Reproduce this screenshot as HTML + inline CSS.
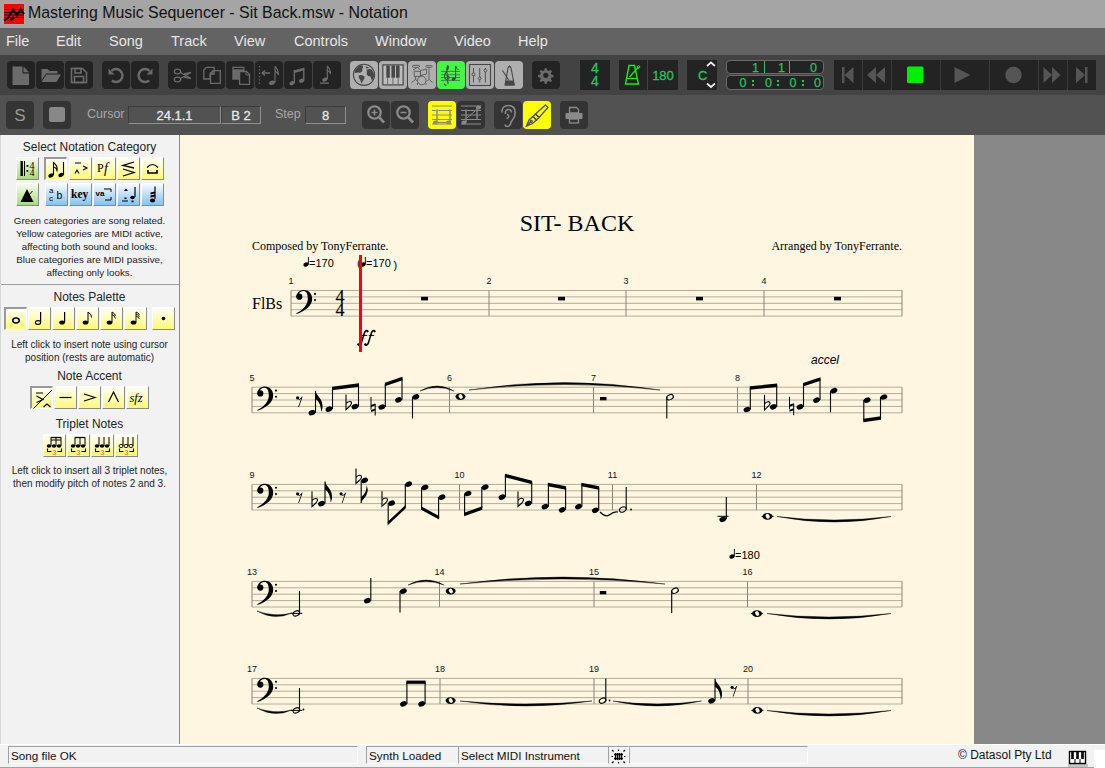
<!DOCTYPE html>
<html><head><meta charset="utf-8">
<style>
*{box-sizing:border-box;margin:0;padding:0}
html,body{width:1105px;height:768px;overflow:hidden;background:#f2f2f2;font-family:"Liberation Sans",sans-serif}
.a{position:absolute}
#title{left:0;top:0;width:1105px;height:28px;background:#a5a5a5}
#title .t{left:28px;top:4px;font-size:15.9px;color:#111;white-space:nowrap}
#menu{left:0;top:28px;width:1105px;height:27px;background:#636363}
#menu span{position:absolute;top:5px;font-size:14.5px;color:#e6e6e6}
#tb1{left:0;top:55px;width:1105px;height:40px;background:#434343}
#tb2{left:0;top:95px;width:1105px;height:40px;background:#525252}
.b1{position:absolute;top:6px;width:28px;height:28px;background:#232323;border-radius:4px}
.blt{position:absolute;top:6px;width:28px;height:28px;background:#afafaf;border-radius:4px}
.b2{position:absolute;top:6px;width:28px;height:28px;background:#343434;border-radius:4px}
.b1 svg,.blt svg,.b2 svg{position:absolute;left:0;top:0}
#left{left:0;top:135px;width:179px;height:609px;background:#f2f2f2;border-left:1px solid #d6d6d6}
#lborder{left:179px;top:135px;width:1px;height:609px;background:#8a8a8a}
#score{left:180px;top:135px;width:794px;height:609px;background:#fff6e1}
#grayr{left:974px;top:135px;width:131px;height:609px;background:#888888}
#status{left:0;top:744px;width:1105px;height:24px;background:#f2f2f2;border-top:1px solid #fff}
#status .f{position:absolute;top:1px;height:18px;border-top:1px solid #a0a0a0;border-left:1px solid #a0a0a0;border-bottom:1px solid #fff;border-right:1px solid #fff;font-size:11.7px;color:#111;padding-left:2px;padding-top:1px;line-height:16px;white-space:nowrap}
#sbline{left:0;top:767px;width:1094px;height:1px;background:#a0a0a0}
.nb{position:absolute;width:23px;height:23px;border-top:1px solid #fff;border-left:1px solid #fff;border-right:1.5px solid #8a8a8a;border-bottom:1.5px solid #8a8a8a}
.nb svg{position:absolute;left:0;top:0}
.nb.sel{border-top:2px solid #9a9a9a;border-left:2px solid #9a9a9a;border-right:1px solid #fff;border-bottom:1px solid #fff}
.g{background:linear-gradient(#f6fbf0,#a6da82)}
.y{background:linear-gradient(#fffff6,#fff878)}
.bl{background:linear-gradient(#f6fbff,#86c2ee)}
</style></head><body>
<div id="title" class="a">
  <svg class="a" style="left:3px;top:3px" width="22" height="22" viewBox="0 0 22 22"><rect x="0.5" y="0.5" width="21" height="21" fill="#9fb0b0"/><rect x="1" y="1" width="20" height="20" fill="#ff0000"/><path d="M1 6.5H21" stroke="#900" stroke-width="1"/><path d="M1 9.5H21M1 12H21M1 14.5H21" stroke="#000" stroke-width="1" opacity="0.85"/><path d="M1 17.5L5 15L10 6.5L14 12.5L17.5 6L21 11" fill="none" stroke="#000" stroke-width="2"/><path d="M7.5 17.5L11 14" stroke="#000" stroke-width="2.5"/></svg>
  <div class="a t">Mastering Music Sequencer - Sit Back.msw - Notation</div>
</div>
<div id="menu" class="a">
  <span style="left:6px">File</span><span style="left:56px">Edit</span><span style="left:109px">Song</span><span style="left:171px">Track</span><span style="left:234px">View</span><span style="left:294px">Controls</span><span style="left:375px">Window</span><span style="left:454px">Video</span><span style="left:518px">Help</span>
</div>
<div id="tb1" class="a">
<div class="b1" style="left:7px"><svg width="28" height="28"><path d="M5.5 5.5H15.5V12.5H22V24H5.5Z" fill="#6b6b6b"/><path d="M16.5 5.5L22 11.3H16.5Z" fill="#6b6b6b"/></svg></div>
<div class="b1" style="left:36px"><svg width="28" height="28"><path d="M5.5 8H11.5L13.5 10H21.5V12.5H10L5.5 19.5Z" fill="#6b6b6b"/><path d="M10.5 13.5H25L20.5 21H5.5Z" fill="#6b6b6b"/></svg></div>
<div class="b1" style="left:65px"><svg width="28" height="28"><path d="M6.5 7.5H17.5L21.5 11.5V21.5H6.5Z" fill="none" stroke="#6b6b6b" stroke-width="1.6"/><rect x="10" y="7.5" width="6" height="4.5" fill="none" stroke="#6b6b6b" stroke-width="1.6"/><rect x="9.5" y="15.5" width="9" height="6" fill="none" stroke="#6b6b6b" stroke-width="1.6"/></svg></div>
<div class="b1" style="left:102px"><svg width="28" height="28"><path d="M9.5 9.8A6.5 6.5 0 1 1 9.8 19.5" fill="none" stroke="#6b6b6b" stroke-width="2.4"/><path d="M6.5 7.5V13.5H12.5Z" fill="#6b6b6b"/></svg></div>
<div class="b1" style="left:131px"><svg width="28" height="28"><path d="M18.5 9.8A6.5 6.5 0 1 0 18.2 19.5" fill="none" stroke="#6b6b6b" stroke-width="2.4"/><path d="M21.5 7.5V13.5H15.5Z" fill="#6b6b6b"/></svg></div>
<div class="b1" style="left:168px"><svg width="28" height="28"><ellipse cx="9.5" cy="10.5" rx="3.2" ry="2.4" fill="none" stroke="#6b6b6b" stroke-width="1.3"/><ellipse cx="9.5" cy="18.5" rx="3.2" ry="2.4" fill="none" stroke="#6b6b6b" stroke-width="1.3"/><path d="M12.5 11.5L23 17.5M12.5 17.5L23 11.5M16 13L23 11.5M16 16L23 17.5" stroke="#6b6b6b" stroke-width="1.3" fill="none"/></svg></div>
<div class="b1" style="left:197px"><svg width="28" height="28"><path d="M9.5 6.3H17.2V13H13V18H6.8V9Z" fill="none" stroke="#6b6b6b" stroke-width="1.3"/><path d="M16 9.7H23.3V22.3H13.5V12.2Z" fill="none" stroke="#6b6b6b" stroke-width="1.3"/><path d="M13.5 12.2H16V9.7" fill="none" stroke="#6b6b6b" stroke-width="1"/></svg></div>
<div class="b1" style="left:226px"><svg width="28" height="28"><path d="M6.3 5.8H18.5V10H13V18.7H6.3Z" fill="#6b6b6b"/><path d="M7.5 7H17.3V8.3H7.5Z" fill="#232323"/><path d="M13.6 10.5H20.5L23.5 13.5V23.3H13.6Z" fill="none" stroke="#6b6b6b" stroke-width="1.3"/><path d="M20 10.5V14H23.5" fill="none" stroke="#6b6b6b" stroke-width="1"/></svg></div>
<div class="b1" style="left:255px"><svg width="28" height="28"><path d="M4.5 5V23" stroke="#6b6b6b" stroke-width="1.3" stroke-dasharray="1.3 2"/><path d="M7 12H15M7 12L10 9.5M7 12L10 14.5" stroke="#6b6b6b" stroke-width="1.5" fill="none"/><path d="M20 5.5V21.5" stroke="#6b6b6b" stroke-width="1.2"/><ellipse cx="17" cy="21.8" rx="3" ry="2.1" fill="#6b6b6b" transform="rotate(-20 17 21.8)"/><path d="M20 5.5Q23.5 9 23.5 14Q22.5 11.5 20 10" fill="none" stroke="#6b6b6b" stroke-width="1.2"/></svg></div>
<div class="b1" style="left:284px"><svg width="28" height="28"><path d="M10.3 22V9.2M19.8 19.5V6.8" stroke="#6b6b6b" stroke-width="1.4" fill="none"/><path d="M10.3 9.2L19.8 6.8V9.6L10.3 12Z" fill="#6b6b6b"/><ellipse cx="8" cy="22.2" rx="2.7" ry="2" fill="#6b6b6b" transform="rotate(-20 8 22.2)"/><ellipse cx="17.6" cy="19.7" rx="2.7" ry="2" fill="#6b6b6b" transform="rotate(-20 17.6 19.7)"/></svg></div>
<div class="b1" style="left:313px"><svg width="28" height="28"><path d="M14.3 5V18.3" stroke="#6b6b6b" stroke-width="1.2"/><path d="M14.3 5Q17.8 8.5 17.5 13Q17 10.5 14.3 9.5" fill="none" stroke="#6b6b6b" stroke-width="1.1"/><ellipse cx="11.8" cy="18.6" rx="2.7" ry="1.9" fill="#6b6b6b" transform="rotate(-20 11.8 18.6)"/><path d="M7 22.1H16" stroke="#6b6b6b" stroke-width="1.4"/></svg></div>
<div class="blt" style="left:350px"><svg width="28" height="28"><circle cx="14" cy="13.8" r="10.6" fill="none" stroke="#474747" stroke-width="1.1"/><path d="M4.5 10.5Q6.5 6 11 4.2Q13.5 4 13.2 6Q11.5 7.5 12.5 9.5Q11 12.5 8.5 11.5Q6.5 11 5.5 12.5Z" fill="#474747"/><path d="M8.5 14.5Q11 13.5 14 15Q15.5 16.5 14 18Q12.5 19.5 12 22.5L11 21Q10 18.5 9 17Z" fill="#474747"/><path d="M16.5 9Q19 7.5 21.5 8.5Q24 11 24.3 14.5Q23.5 17.5 22 19.8Q21 17.5 20.5 15.5Q17.5 15.5 16.5 13Q17.5 11 16.5 9Z" fill="#474747"/><path d="M15.5 5.5Q18 5.5 19.5 7L16.5 7.5Z" fill="#474747"/></svg></div>
<div class="blt" style="left:379px"><svg width="28" height="28"><rect x="3.8" y="3.9" width="20.3" height="20" fill="#bdbdbd" stroke="#474747" stroke-width="1.2"/><path d="M7.3 4.5H10.8V16.8H7.3ZM12.4 4.5H16V16.8H12.4ZM17 4.5H20.6V16.8H17Z" fill="#474747"/><path d="M8.6 16.8V23.5M13.9 16.8V23.5M19.2 16.8V23.5" stroke="#6a6a6a" stroke-width="1"/></svg></div>
<div class="blt" style="left:408px"><svg width="28" height="28" fill="none" stroke="#575757" stroke-width="0.9"><ellipse cx="8" cy="5.3" rx="3.8" ry="1.1"/><ellipse cx="21" cy="5.4" rx="3.4" ry="1"/><path d="M21 6.4V18.5M9.5 6.5L12 8.5M5 9L8.5 7"/><path d="M6.2 10.3H12.5V15.4H6.2Z"/><path d="M12.5 9.5L18.5 8V13L12.5 14.5Z"/><circle cx="13.8" cy="19.5" r="4.3"/><path d="M7.5 15.4V18.5L3.5 21.7M7.5 18.5L9.5 20M21.4 18.5L24.5 21.7M21 18.5L19 20.5M9.5 22V24M18 22V24"/></svg></div>
<div class="blt" style="left:437px;background:#45f745"><svg width="28" height="28" fill="none" stroke="#444"><path d="M4 10.4H23M4 13.7H23M4 16.5H23M4 19.4H23" stroke-width="0.8" stroke="#555"/><path d="M9.5 24Q7 24.5 7.5 22.5M10.5 4.5Q12 5.5 11 8Q8 12 7.5 15Q7.5 18.5 10 18.5Q12.5 18.5 12 16Q11.5 14.5 9.5 15M10.5 4.5Q9.5 8 10 12L11 23" stroke-width="1.1"/><ellipse cx="16.6" cy="18.2" rx="2.1" ry="1.5" fill="#444" stroke="none" transform="rotate(-25 16.6 18.2)"/><path d="M18.6 17.8V5Q19.5 7.5 21.5 9" stroke-width="1"/></svg></div>
<div class="blt" style="left:466px"><svg width="28" height="28" fill="none" stroke="#474747"><rect x="3.5" y="3.5" width="21" height="21" stroke-width="1.1"/><path d="M7.5 7V21.5M13.7 7V21.5M19.4 7V21.5" stroke-width="0.9"/><circle cx="7.5" cy="13.3" r="1.5" fill="#afafaf" stroke-width="0.9"/><path d="M13.7 15.5L15.2 17.3L13.7 19.1L12.2 17.3Z" fill="#afafaf" stroke-width="0.9"/><path d="M19.4 7.8L20.9 9.6L19.4 11.4L17.9 9.6Z" fill="#afafaf" stroke-width="0.9"/></svg></div>
<div class="blt" style="left:495px"><svg width="28" height="28"><path d="M13 7Q14.5 3.5 16 7L19.3 24H10Z" fill="none" stroke="#484848" stroke-width="1.1"/><path d="M10.8 19.5H18.5L19.5 24.5H10Z" fill="#484848"/><path d="M7.5 9.5L14 19.5" stroke="#484848" stroke-width="1.1"/><path d="M13 6.5L14.5 4L16 6.5Z" fill="#484848"/></svg></div>
<div class="b1" style="left:532px"><svg width="28" height="28"><g transform="translate(13.8 14.3) scale(0.8) translate(-14 -14)"><path d="M12.6 5.2h2.8l.5 2.8 1.6.7 2.3-1.6 2 2-1.6 2.3.7 1.6 2.8.5v2.8l-2.8.5-.7 1.6 1.6 2.3-2 2-2.3-1.6-1.6.7-.5 2.8h-2.8l-.5-2.8-1.6-.7-2.3 1.6-2-2 1.6-2.3-.7-1.6-2.8-.5v-2.8l2.8-.5.7-1.6-1.6-2.3 2-2 2.3 1.6 1.6-.7Z" fill="#6b6b6b"/><circle cx="14" cy="14" r="3.2" fill="#232323"/></g></svg></div>
<div class="a" style="left:580px;top:5px;width:30px;height:30px;background:#232323"><div class="a" style="left:0;top:1.5px;width:30px;text-align:center;font-size:14px;line-height:13px;color:#27c45a;-webkit-text-stroke:0.3px #27c45a">4<br>4</div></div>
<div class="a" style="left:619px;top:5px;width:28px;height:30px;background:#232323"><svg width="28" height="30"><path d="M10 5.5H15.5L19.5 24H6.5Z" fill="none" stroke="#18ee18" stroke-width="1.4"/><path d="M8 18.5H18" stroke="#18ee18" stroke-width="1.2"/><path d="M10.5 17L19.5 7" stroke="#18ee18" stroke-width="1.2"/><circle cx="19.5" cy="7" r="1.3" fill="none" stroke="#18ee18" stroke-width="1"/></svg></div>
<div class="a" style="left:648px;top:5px;width:30px;height:30px;background:#232323"><div class="a" style="left:0;top:7.5px;width:30px;text-align:center;font-size:13px;color:#27c45a;-webkit-text-stroke:0.3px #27c45a">180</div></div>
<div class="a" style="left:687px;top:5px;width:30px;height:30px;background:#232323"><div class="a" style="left:11px;top:7.5px;font-size:13px;color:#27c45a;-webkit-text-stroke:0.3px #27c45a">C</div><svg class="a" style="left:19px;top:0px" width="10" height="30"><path d="M1 6L5 2.5L9 6M1 23.5L5 27L9 23.5" fill="none" stroke="#f0f0f0" stroke-width="1.7"/></svg></div>
<div class="a" style="left:726px;top:5px;width:98px;height:14px;background:#232323;border:1px solid #6a6a6a;border-radius:4px"></div>
<div class="a" style="left:726px;top:20px;width:98px;height:15px;background:#232323;border:1px solid #6a6a6a;border-radius:4px"></div>
<div class="a" style="left:764px;top:6px;width:1px;height:12px;background:#27c45a"></div>
<div class="a" style="left:789px;top:6px;width:1px;height:12px;background:#27c45a"></div>
<div class="a" style="left:752px;top:5.5px;font-size:12.5px;color:#27c45a;-webkit-text-stroke:0.25px #27c45a">1</div>
<div class="a" style="left:778px;top:5.5px;font-size:12.5px;color:#27c45a;-webkit-text-stroke:0.25px #27c45a">1</div>
<div class="a" style="left:810px;top:5.5px;font-size:12.5px;color:#27c45a;-webkit-text-stroke:0.25px #27c45a">0</div>
<div class="a" style="left:739.5px;top:20.5px;font-size:12.5px;color:#27c45a;-webkit-text-stroke:0.25px #27c45a">0</div>
<div class="a" style="left:765px;top:20.5px;font-size:12.5px;color:#27c45a;-webkit-text-stroke:0.25px #27c45a">0</div>
<div class="a" style="left:789.5px;top:20.5px;font-size:12.5px;color:#27c45a;-webkit-text-stroke:0.25px #27c45a">0</div>
<div class="a" style="left:814px;top:20.5px;font-size:12.5px;color:#27c45a;-webkit-text-stroke:0.25px #27c45a">0</div>
<div class="a" style="left:752px;top:25px;width:2px;height:2px;background:#27c45a"></div><div class="a" style="left:752px;top:29px;width:2px;height:2px;background:#27c45a"></div>
<div class="a" style="left:777px;top:25px;width:2px;height:2px;background:#27c45a"></div><div class="a" style="left:777px;top:29px;width:2px;height:2px;background:#27c45a"></div>
<div class="a" style="left:802px;top:25px;width:2px;height:2px;background:#27c45a"></div><div class="a" style="left:802px;top:29px;width:2px;height:2px;background:#27c45a"></div>
<div class="a" style="left:834px;top:5px;width:262px;height:30px;background:#232323"></div>
<div class="a" style="left:862px;top:5px;width:1px;height:30px;background:#3a3a3a"></div>
<div class="a" style="left:891px;top:5px;width:1px;height:30px;background:#3a3a3a"></div>
<div class="a" style="left:940px;top:5px;width:1px;height:30px;background:#3a3a3a"></div>
<div class="a" style="left:989px;top:5px;width:1px;height:30px;background:#3a3a3a"></div>
<div class="a" style="left:1038px;top:5px;width:1px;height:30px;background:#3a3a3a"></div>
<div class="a" style="left:1067px;top:5px;width:1px;height:30px;background:#3a3a3a"></div>
<svg class="a" style="left:834px;top:5px" width="262" height="30">
<path d="M8 7H10.5V23H8ZM10.5 15L19.5 7V23Z" fill="#555"/>
<path d="M33 15L42 7V23ZM42 15L51 7V23Z" fill="#555"/>
<rect x="73" y="6.5" width="16.5" height="16.5" rx="1.5" fill="#00ee00"/>
<path d="M120.5 7V23L136.5 15Z" fill="#555"/>
<circle cx="179.5" cy="15" r="8.2" fill="#555"/>
<path d="M209.5 7L218 15L209.5 23ZM218 7L226.5 15L218 23Z" fill="#555"/>
<path d="M242 7L251 15L242 23ZM251 7H253.5V23H251Z" fill="#555"/>
</svg>
</div>
<div id="tb2" class="a">
<div class="b2" style="left:6px"><div class="a" style="left:0;top:5px;width:28px;text-align:center;font-size:17px;color:#9a9a9a">S</div></div>
<div class="b2" style="left:43px"><div class="a" style="left:6px;top:6px;width:15.5px;height:15px;background:#888;border-radius:2.5px"></div></div>
<div class="a" style="left:87px;top:11.5px;font-size:12.5px;color:#a8a8a8">Cursor</div>
<div class="a" style="left:128px;top:11px;width:93px;height:18px;border-top:1px solid #3c3c3c;border-left:1px solid #3c3c3c;border-bottom:1px solid #909090;border-right:1px solid #909090;font-size:13px;color:#e8e8e8;text-align:center;line-height:17px;-webkit-text-stroke:0.3px #e8e8e8">24.1.1</div>
<div class="a" style="left:221px;top:11px;width:40px;height:18px;border-top:1px solid #3c3c3c;border-left:1px solid #3c3c3c;border-bottom:1px solid #909090;border-right:1px solid #909090;font-size:13px;color:#e8e8e8;text-align:center;line-height:17px;-webkit-text-stroke:0.3px #e8e8e8">B 2</div>
<div class="a" style="left:275px;top:11.5px;font-size:12.5px;color:#a8a8a8">Step</div>
<div class="a" style="left:305px;top:11px;width:41px;height:18px;border-top:1px solid #3c3c3c;border-left:1px solid #3c3c3c;border-bottom:1px solid #909090;border-right:1px solid #909090;font-size:13px;color:#e8e8e8;text-align:center;line-height:17px;-webkit-text-stroke:0.3px #e8e8e8">8</div>
<div class="b2" style="left:362px"><svg width="28" height="28" fill="none" stroke="#8a8a8a"><circle cx="12.5" cy="11.5" r="6.2" stroke-width="2.3"/><path d="M17 16.2L22 21.5" stroke-width="2.6"/><path d="M9.5 11.5H15.5M12.5 8.5V14.5" stroke-width="1.6"/></svg></div>
<div class="b2" style="left:391px"><svg width="28" height="28" fill="none" stroke="#8a8a8a"><circle cx="12.5" cy="11.5" r="6.2" stroke-width="2.3"/><path d="M17 16.2L22 21.5" stroke-width="2.6"/><path d="M9.5 11.5H15.5" stroke-width="1.6"/></svg></div>
<div class="b2" style="left:428px;background:#ffff00"><svg width="28" height="28" fill="none" stroke="#8a8a8a" stroke-width="1.1"><path d="M4 5H24M4 9.5H24M4 14H24M4 18.5H24M4 23H24"/><path d="M9 8.5V21M22 8.5V21" stroke-width="1.4"/><ellipse cx="7.5" cy="21.5" rx="2" ry="1.4" fill="#8a8a8a"/><ellipse cx="20.5" cy="21.5" rx="2" ry="1.4" fill="#8a8a8a"/><path d="M10 21.5H18" stroke-width="1.4"/></svg></div>
<div class="b2" style="left:457px"><svg width="28" height="28" fill="none" stroke="#8a8a8a" stroke-width="1.1"><path d="M4 5H24M4 9.5H24M4 14H24M4 18.5H24M4 23H24"/><path d="M9 8.5V21M20 6V19" stroke-width="1.4"/><ellipse cx="7" cy="21.5" rx="2" ry="1.4" fill="#8a8a8a"/><ellipse cx="21.5" cy="6.5" rx="2" ry="1.4" fill="#8a8a8a"/><path d="M10 17L18 10" stroke-width="1"/></svg></div>
<div class="b2" style="left:494px"><svg width="28" height="28" fill="none" stroke="#8a8a8a" stroke-width="1.6"><path d="M7.8 11.5Q7.8 4.5 14.5 4.5Q21.2 4.5 21.2 12Q21.2 16 18 19.5Q16.8 21 16.5 23Q16 25.5 13.5 25.5Q11.5 25.5 10.8 23.5"/><path d="M11.5 13Q11 8.5 14.5 8.5Q17.5 8.5 17.5 11.5M13 13.5Q15 13.5 14.5 16Q14 17.5 12.5 17.5"/></svg></div>
<div class="b2" style="left:523px;background:#ffff00"><svg width="28" height="28" fill="none" stroke="#4a4a78" stroke-width="1.3"><path d="M22.5 4L25 6.5L16 16.5L12.5 13Z"/><path d="M12.5 13L16 16.5L13.5 19L10 15.5Z"/><path d="M10 15.5L13.5 19L9.5 22.5L3.5 25L6 19Z"/><circle cx="8.3" cy="20.3" r="1"/><path d="M3.5 25L8 20.5"/></svg></div>
<div class="b2" style="left:560px"><svg width="28" height="28"><path d="M9.5 6.5H16.5L18.5 8.5V12H9.5Z" fill="none" stroke="#8a8a8a" stroke-width="1.3"/><rect x="5.5" y="12" width="17" height="6" rx="1" fill="#8a8a8a"/><rect x="9.5" y="18" width="9" height="4" fill="none" stroke="#8a8a8a" stroke-width="1.3"/></svg></div>
</div>
<div id="left" class="a"></div>
<div class="a" style="left:0;top:0">
<div class="a" style="left:0px;top:140px;width:179px;text-align:center;font-size:12px;color:#222;white-space:nowrap">Select Notation Category</div><div class="nb g" style="left:16px;top:157px"><svg width="21" height="21" viewBox="0 0 21 21"><rect x="3.5" y="3" width="2.4" height="15" fill="#000"/><rect x="7" y="3" width="1" height="15" fill="#000"/><rect x="9.5" y="7" width="1.8" height="1.8" fill="#000"/><rect x="9.5" y="12" width="1.8" height="1.8" fill="#000"/><text x="12.5" y="10.5" font-family="Liberation Serif" font-size="10" fill="#000">4</text><text x="12.5" y="18" font-family="Liberation Serif" font-size="10" fill="#000">4</text></svg></div>
<div class="nb y sel" style="left:44px;top:157px"><svg width="21" height="21" viewBox="0 0 21 21"><path d="M7.5 16V3.5Q12 7 11 11.5Q10 8.5 8 8" fill="none" stroke="#000" stroke-width="1.1"/><ellipse cx="5" cy="16.5" rx="2.8" ry="2" fill="#000" transform="rotate(-25 5 16.5)"/><path d="M17.5 16V3" stroke="#000" stroke-width="1.1"/><ellipse cx="15" cy="16" rx="2.8" ry="2" fill="#000" transform="rotate(-25 15 16)"/></svg></div>
<div class="nb y" style="left:69px;top:157px"><svg width="21" height="21" viewBox="0 0 21 21"><path d="M5 5H11M13 8L17 10L13 12M5 15.5L7 12L9 15.5" fill="none" stroke="#000" stroke-width="1.1"/></svg></div>
<div class="nb y" style="left:93px;top:157px"><svg width="21" height="21" viewBox="0 0 21 21"><text x="3" y="14" font-family="Liberation Serif" font-size="12" fill="#000">P</text><text x="10" y="15" font-family="Liberation Serif" font-style="italic" font-size="14" fill="#000">f</text></svg></div>
<div class="nb y" style="left:117px;top:157px"><svg width="21" height="21" viewBox="0 0 21 21"><path d="M16 4L5 7.5L16 10M5 11L16 14.5L5 18" fill="none" stroke="#000" stroke-width="1.3"/></svg></div>
<div class="nb y" style="left:141px;top:157px"><svg width="21" height="21" viewBox="0 0 21 21"><path d="M5 9.5Q10.5 3.5 16 9.5" fill="none" stroke="#000" stroke-width="1.2"/><path d="M6 12V15H15V12" fill="none" stroke="#000" stroke-width="1.6"/></svg></div>
<div class="nb g" style="left:16px;top:183px"><svg width="21" height="21" viewBox="0 0 21 21"><path d="M3.5 18L10 5L16.5 18Z" fill="#000"/><path d="M9 14L15.5 7" stroke="#000" stroke-width="1"/></svg></div>
<div class="nb bl" style="left:45px;top:183px"><svg width="21" height="21" viewBox="0 0 21 21"><text x="3" y="9" font-family="Liberation Sans" font-size="8" fill="#000">a</text><text x="3" y="17" font-family="Liberation Sans" font-size="8" fill="#000">c</text><text x="10.5" y="14.5" font-family="Liberation Sans" font-size="10.5" fill="#000">b</text></svg></div>
<div class="nb bl" style="left:69px;top:183px"><svg width="21" height="21" viewBox="0 0 21 21"><text x="1" y="14" font-family="Liberation Serif" font-weight="bold" font-size="11.5" fill="#000">key</text></svg></div>
<div class="nb bl" style="left:93px;top:183px"><svg width="21" height="21" viewBox="0 0 21 21"><text x="1.5" y="12" font-family="Liberation Sans" font-weight="bold" font-size="8" fill="#000">va</text><path d="M10 5H17V8M11 16H17V13" fill="none" stroke="#000" stroke-width="1"/></svg></div>
<div class="nb bl" style="left:117px;top:183px"><svg width="21" height="21" viewBox="0 0 21 21"><path d="M6 7L8 4.5L10 7Z" fill="#000"/><rect x="6.5" y="13.5" width="2" height="1.6" fill="#000"/><path d="M4 17H10" stroke="#000" stroke-width="1"/><path d="M17 3V13" stroke="#000" stroke-width="1.2"/><ellipse cx="14.5" cy="13.5" rx="2.3" ry="1.8" fill="#000"/><rect x="13.5" y="16.5" width="2" height="1.8" fill="#000"/></svg></div>
<div class="nb bl" style="left:141px;top:183px"><svg width="21" height="21" viewBox="0 0 21 21"><path d="M13 2.5V15" stroke="#000" stroke-width="1.2"/><path d="M8.5 8.5L13 7.5V9.5L8.5 10.5ZM8.5 11.5L13 10.5V12.5L8.5 13.5Z" fill="#000"/><ellipse cx="10.5" cy="16.5" rx="2.6" ry="1.9" fill="#000"/></svg></div>
<div class="a" style="left:0px;top:215px;width:179px;text-align:center;font-size:9.8px;color:#222;white-space:nowrap">Green categories are song related.</div>
<div class="a" style="left:0px;top:228px;width:179px;text-align:center;font-size:9.8px;color:#222;white-space:nowrap">Yellow categories are MIDI active,</div>
<div class="a" style="left:0px;top:241px;width:179px;text-align:center;font-size:9.8px;color:#222;white-space:nowrap">affecting both sound and looks.</div>
<div class="a" style="left:0px;top:254px;width:179px;text-align:center;font-size:9.8px;color:#222;white-space:nowrap">Blue categories are MIDI passive,</div>
<div class="a" style="left:0px;top:267px;width:179px;text-align:center;font-size:9.8px;color:#222;white-space:nowrap">affecting only looks.</div>
<div class="a" style="left:1px;top:284px;width:178px;height:1px;background:#a0a0a0"></div>
<div class="a" style="left:0px;top:290px;width:179px;text-align:center;font-size:12px;color:#222;white-space:nowrap">Notes Palette</div><div class="nb y sel" style="left:4px;top:307px"><svg width="21" height="21" viewBox="0 0 21 21"><ellipse cx="10" cy="11.5" rx="3.2" ry="2.4" fill="none" stroke="#000" stroke-width="1.5"/></svg></div>
<div class="nb y" style="left:28px;top:307px"><svg width="21" height="21" viewBox="0 0 21 21"><ellipse cx="9" cy="14.5" rx="2.6" ry="1.9" fill="none" stroke="#000" stroke-width="1.2"/><path d="M11.6 14.5V4" stroke="#000" stroke-width="1.2"/></svg></div>
<div class="nb y" style="left:52px;top:307px"><svg width="21" height="21" viewBox="0 0 21 21"><ellipse cx="9" cy="14.5" rx="2.8" ry="2.1" fill="#000"/><path d="M11.6 14.5V4" stroke="#000" stroke-width="1.2"/></svg></div>
<div class="nb y" style="left:76px;top:307px"><svg width="21" height="21" viewBox="0 0 21 21"><ellipse cx="8.5" cy="14.5" rx="2.8" ry="2.1" fill="#000"/><path d="M11 14.5V4Q15 6.5 14.5 9.5" fill="none" stroke="#000" stroke-width="1"/></svg></div>
<div class="nb y" style="left:100px;top:307px"><svg width="21" height="21" viewBox="0 0 21 21"><ellipse cx="8.5" cy="14.5" rx="2.8" ry="2.1" fill="#000"/><path d="M11 14.5V4Q14 5.5 14.5 8M11 6.5Q14 8 14.5 10.5" fill="none" stroke="#000" stroke-width="1"/></svg></div>
<div class="nb y" style="left:124px;top:307px"><svg width="21" height="21" viewBox="0 0 21 21"><ellipse cx="8.5" cy="14.5" rx="2.8" ry="2.1" fill="#000"/><path d="M11 14.5V4Q14 5 14.5 7M11 6Q14 7 14.5 9M11 8Q14 9 14.5 11" fill="none" stroke="#000" stroke-width="0.9"/></svg></div>
<div class="nb y" style="left:152px;top:307px"><svg width="21" height="21" viewBox="0 0 21 21"><circle cx="10.5" cy="10.5" r="1.8" fill="#000"/></svg></div>
<div class="a" style="left:0px;top:339px;width:179px;text-align:center;font-size:10px;color:#222;white-space:nowrap">Left click to insert note using cursor</div>
<div class="a" style="left:0px;top:352px;width:179px;text-align:center;font-size:10px;color:#222;white-space:nowrap">position (rests are automatic)</div>
<div class="a" style="left:0px;top:369px;width:179px;text-align:center;font-size:12px;color:#222;white-space:nowrap">Note Accent</div><div class="nb y sel" style="left:30px;top:386px"><svg width="21" height="21" viewBox="0 0 21 21"><path d="M4 5H11M4.5 8L11 11.5L4.5 14.5M11.5 19L15 16L18.5 19" fill="none" stroke="#000" stroke-width="1.2"/><path d="M1.5 20.5L20 2" stroke="#000" stroke-width="1"/></svg></div>
<div class="nb y" style="left:54px;top:386px"><svg width="21" height="21" viewBox="0 0 21 21"><path d="M4.5 10.5H16.5" stroke="#000" stroke-width="1.2"/></svg></div>
<div class="nb y" style="left:78px;top:386px"><svg width="21" height="21" viewBox="0 0 21 21"><path d="M5 7L16 10.5L5 14" fill="none" stroke="#000" stroke-width="1.2"/></svg></div>
<div class="nb y" style="left:102px;top:386px"><svg width="21" height="21" viewBox="0 0 21 21"><path d="M5.5 15L10.5 5L15.5 15" fill="none" stroke="#000" stroke-width="1.2"/></svg></div>
<div class="nb y" style="left:126px;top:386px"><svg width="21" height="21" viewBox="0 0 21 21"><text x="2.5" y="14.5" font-family="Liberation Serif" font-style="italic" font-size="12.5" fill="#000">sfz</text></svg></div>
<div class="a" style="left:0px;top:417px;width:179px;text-align:center;font-size:12px;color:#222;white-space:nowrap">Triplet Notes</div><div class="nb y" style="left:43px;top:434px"><svg width="21" height="21" viewBox="0 0 21 21"><ellipse cx="5.0" cy="11" rx="2.3" ry="1.8" fill="#000"/><path d="M7.0 11V2" stroke="#000" stroke-width="1"/><ellipse cx="10.0" cy="11" rx="2.3" ry="1.8" fill="#000"/><path d="M12.0 11V2" stroke="#000" stroke-width="1"/><ellipse cx="15.0" cy="11" rx="2.3" ry="1.8" fill="#000"/><path d="M17.0 11V2" stroke="#000" stroke-width="1"/><path d="M7 2.5H17" stroke="#000" stroke-width="1.3"/><path d="M7 5H17" stroke="#000" stroke-width="1"/><path d="M3.5 13.5V16.5H7.5M13.5 16.5H17.5V13.5" fill="none" stroke="#000" stroke-width="1.1"/><text x="8.3" y="19.5" font-family="Liberation Sans" font-size="7.5" fill="#b07820">3</text></svg></div>
<div class="nb y" style="left:67px;top:434px"><svg width="21" height="21" viewBox="0 0 21 21"><ellipse cx="5.0" cy="11" rx="2.3" ry="1.8" fill="#000"/><path d="M7.0 11V2" stroke="#000" stroke-width="1"/><ellipse cx="10.0" cy="11" rx="2.3" ry="1.8" fill="#000"/><path d="M12.0 11V2" stroke="#000" stroke-width="1"/><ellipse cx="15.0" cy="11" rx="2.3" ry="1.8" fill="#000"/><path d="M17.0 11V2" stroke="#000" stroke-width="1"/><path d="M7 2.5H17" stroke="#000" stroke-width="1.3"/><path d="M3.5 13.5V16.5H7.5M13.5 16.5H17.5V13.5" fill="none" stroke="#000" stroke-width="1.1"/><text x="8.3" y="19.5" font-family="Liberation Sans" font-size="7.5" fill="#b07820">3</text></svg></div>
<div class="nb y" style="left:91px;top:434px"><svg width="21" height="21" viewBox="0 0 21 21"><ellipse cx="5.0" cy="11" rx="2.3" ry="1.8" fill="#000"/><path d="M7.0 11V2" stroke="#000" stroke-width="1"/><ellipse cx="10.0" cy="11" rx="2.3" ry="1.8" fill="#000"/><path d="M12.0 11V2" stroke="#000" stroke-width="1"/><ellipse cx="15.0" cy="11" rx="2.3" ry="1.8" fill="#000"/><path d="M17.0 11V2" stroke="#000" stroke-width="1"/><path d="M3.5 13.5V16.5H7.5M13.5 16.5H17.5V13.5" fill="none" stroke="#000" stroke-width="1.1"/><text x="8.3" y="19.5" font-family="Liberation Sans" font-size="7.5" fill="#b07820">3</text></svg></div>
<div class="nb y" style="left:115px;top:434px"><svg width="21" height="21" viewBox="0 0 21 21"><ellipse cx="5.0" cy="11" rx="2" ry="1.6" fill="none" stroke="#000" stroke-width="0.9"/><path d="M7.0 11V2" stroke="#000" stroke-width="1"/><ellipse cx="10.0" cy="11" rx="2" ry="1.6" fill="none" stroke="#000" stroke-width="0.9"/><path d="M12.0 11V2" stroke="#000" stroke-width="1"/><ellipse cx="15.0" cy="11" rx="2" ry="1.6" fill="none" stroke="#000" stroke-width="0.9"/><path d="M17.0 11V2" stroke="#000" stroke-width="1"/><path d="M3.5 13.5V16.5H7.5M13.5 16.5H17.5V13.5" fill="none" stroke="#000" stroke-width="1.1"/><text x="8.3" y="19.5" font-family="Liberation Sans" font-size="7.5" fill="#b07820">3</text></svg></div>
<div class="a" style="left:0px;top:465px;width:179px;text-align:center;font-size:10px;color:#222;white-space:nowrap">Left click to insert all 3 triplet notes,</div>
<div class="a" style="left:0px;top:478px;width:179px;text-align:center;font-size:10px;color:#222;white-space:nowrap">then modify pitch of notes 2 and 3.</div>
</div>
<div id="lborder" class="a"></div>
<div id="score" class="a"></div>
<svg class="a" style="left:180px;top:135px" width="794" height="609" font-family="Liberation Sans"><g transform="translate(-180,-135)"><text x="577" y="231" font-family="Liberation Serif" font-size="24" text-anchor="middle" fill="#000">SIT- BACK</text><text x="252" y="249.7" font-family="Liberation Serif" font-size="12" fill="#000">Composed by TonyFerrante.</text><text x="902" y="249.7" font-family="Liberation Serif" font-size="12" text-anchor="end" fill="#000">Arranged by TonyFerrante.</text><ellipse cx="306" cy="264.5" rx="2.7" ry="2" fill="#000" transform="rotate(-20 306 264.5)"/><line x1="308.4" y1="264.5" x2="308.4" y2="257.0" stroke="#000" stroke-width="0.9"/><text x="309" y="266.8" font-size="11" fill="#000">=170</text><text x="357" y="266.8" font-size="11.5" fill="#000">(</text><ellipse cx="363" cy="264.5" rx="2.7" ry="2" fill="#000" transform="rotate(-20 363 264.5)"/><line x1="365.4" y1="264.5" x2="365.4" y2="257.0" stroke="#000" stroke-width="0.9"/><text x="366" y="266.8" font-size="11" fill="#000">=170</text><text x="393.5" y="269" font-size="11" fill="#000">)</text><ellipse cx="732" cy="556.5" rx="2.7" ry="2" fill="#000" transform="rotate(-20 732 556.5)"/><line x1="734.4" y1="556.5" x2="734.4" y2="549.0" stroke="#000" stroke-width="0.9"/><text x="735" y="558.8" font-size="11" fill="#000">=180</text><text x="811" y="364" font-size="12" font-style="italic" fill="#000">accel</text><text x="252" y="309" font-family="Liberation Serif" font-size="16" fill="#000">FlBs</text><line x1="291" y1="290.50" x2="902" y2="290.50" stroke="#b4ac9a" stroke-width="1"/><line x1="291" y1="296.90" x2="902" y2="296.90" stroke="#b4ac9a" stroke-width="1"/><line x1="291" y1="303.30" x2="902" y2="303.30" stroke="#b4ac9a" stroke-width="1"/><line x1="291" y1="309.70" x2="902" y2="309.70" stroke="#b4ac9a" stroke-width="1"/><line x1="291" y1="316.10" x2="902" y2="316.10" stroke="#b4ac9a" stroke-width="1"/><line x1="291" y1="290.5" x2="291" y2="316.10" stroke="#8a8478" stroke-width="1"/><line x1="489" y1="290.5" x2="489" y2="316.10" stroke="#8a8478" stroke-width="1"/><line x1="626" y1="290.5" x2="626" y2="316.10" stroke="#8a8478" stroke-width="1"/><line x1="764" y1="290.5" x2="764" y2="316.10" stroke="#8a8478" stroke-width="1"/><line x1="902" y1="290.5" x2="902" y2="316.10" stroke="#8a8478" stroke-width="1"/><text x="291" y="284.2" font-size="9" text-anchor="middle" fill="#111">1</text><text x="489" y="284.2" font-size="9" text-anchor="middle" fill="#111">2</text><text x="626" y="284.2" font-size="9" text-anchor="middle" fill="#111">3</text><text x="764" y="284.2" font-size="9" text-anchor="middle" fill="#111">4</text><g transform="translate(296,290.5)"><path d="M0.6 6.2C0.4 1.8 4.2 -0.6 7.8 -0.6C13.2 -0.6 16.2 3.4 16.2 8.6C16.2 15 9.5 20.5 0.6 23.6L0.2 22.8C7.2 19.2 11.8 14.2 11.8 8.2C11.8 3 10 0.6 7.4 0.6C5 0.6 3.2 2 3 3.6Z" fill="#000"/><circle cx="3.3" cy="6.2" r="3.1" fill="#000"/><circle cx="19" cy="3.4" r="1.05" fill="#000"/><circle cx="19" cy="9.6" r="1.05" fill="#000"/></g><text x="340" y="303" font-family="Liberation Serif" font-size="18" text-anchor="middle" fill="#000" stroke="#000" stroke-width="0.2">4</text><text x="340" y="316" font-family="Liberation Serif" font-size="18" text-anchor="middle" fill="#000" stroke="#000" stroke-width="0.2">4</text><rect x="421" y="296.8" width="7" height="3.6" fill="#000"/><rect x="558" y="296.8" width="7" height="3.6" fill="#000"/><rect x="696" y="296.8" width="7" height="3.6" fill="#000"/><rect x="834" y="296.8" width="7" height="3.6" fill="#000"/><g transform="translate(357,329.8)"><path d="M1.2 15.2C2.8 15.6 4 14.5 4.6 12.5L7.4 3.2C8 1.2 9.3 0.4 10.8 0.8" fill="none" stroke="#000" stroke-width="1.5"/><circle cx="1.4" cy="14.6" r="1.2" fill="#000"/><circle cx="10.6" cy="1.5" r="1.1" fill="#000"/><path d="M4.8 5.6H10.2" stroke="#000" stroke-width="1"/></g><g transform="translate(364,329.8)"><path d="M1.2 15.2C2.8 15.6 4 14.5 4.6 12.5L7.4 3.2C8 1.2 9.3 0.4 10.8 0.8" fill="none" stroke="#000" stroke-width="1.5"/><circle cx="1.4" cy="14.6" r="1.2" fill="#000"/><circle cx="10.6" cy="1.5" r="1.1" fill="#000"/><path d="M4.8 5.6H10.2" stroke="#000" stroke-width="1"/></g><line x1="252" y1="387.20" x2="902" y2="387.20" stroke="#b4ac9a" stroke-width="1"/><line x1="252" y1="393.60" x2="902" y2="393.60" stroke="#b4ac9a" stroke-width="1"/><line x1="252" y1="400.00" x2="902" y2="400.00" stroke="#b4ac9a" stroke-width="1"/><line x1="252" y1="406.40" x2="902" y2="406.40" stroke="#b4ac9a" stroke-width="1"/><line x1="252" y1="412.80" x2="902" y2="412.80" stroke="#b4ac9a" stroke-width="1"/><line x1="252" y1="387.2" x2="252" y2="412.80" stroke="#8a8478" stroke-width="1"/><line x1="449.5" y1="387.2" x2="449.5" y2="412.80" stroke="#8a8478" stroke-width="1"/><line x1="593.5" y1="387.2" x2="593.5" y2="412.80" stroke="#8a8478" stroke-width="1"/><line x1="737.5" y1="387.2" x2="737.5" y2="412.80" stroke="#8a8478" stroke-width="1"/><line x1="902" y1="387.2" x2="902" y2="412.80" stroke="#8a8478" stroke-width="1"/><text x="252" y="380.9" font-size="9" text-anchor="middle" fill="#111">5</text><text x="449.5" y="380.9" font-size="9" text-anchor="middle" fill="#111">6</text><text x="593.5" y="380.9" font-size="9" text-anchor="middle" fill="#111">7</text><text x="737.5" y="380.9" font-size="9" text-anchor="middle" fill="#111">8</text><g transform="translate(257,387.2)"><path d="M0.6 6.2C0.4 1.8 4.2 -0.6 7.8 -0.6C13.2 -0.6 16.2 3.4 16.2 8.6C16.2 15 9.5 20.5 0.6 23.6L0.2 22.8C7.2 19.2 11.8 14.2 11.8 8.2C11.8 3 10 0.6 7.4 0.6C5 0.6 3.2 2 3 3.6Z" fill="#000"/><circle cx="3.3" cy="6.2" r="3.1" fill="#000"/><circle cx="19" cy="3.4" r="1.05" fill="#000"/><circle cx="19" cy="9.6" r="1.05" fill="#000"/></g><circle cx="297.6" cy="397.8" r="1.6" fill="#000"/><path d="M297 399C299 399.8 301 398.5 302 396.5L302.6 396.8L299 407L298.2 407L301 399C300 399.8 298.5 400 297 399Z" fill="#000"/><ellipse cx="312" cy="412.7" rx="3.5" ry="2.55" fill="#000" transform="rotate(-22 312 412.7)"/><line x1="315.5" y1="412.7" x2="315.5" y2="391" stroke="#000" stroke-width="1.1"/><path d="M315.5 391C316.5 396 323.5 399 322.5 408C322.0 410 321.5 411 321.0 412C321.5 408 319.5 401 315.5 399Z" fill="#000"/><ellipse cx="329" cy="409.1" rx="3.5" ry="2.55" fill="#000" transform="rotate(-22 329 409.1)"/><line x1="332.5" y1="409.1" x2="332.5" y2="388.5" stroke="#000" stroke-width="1.1"/><path d="M346 394.6V409.6C348 407.6 351.5 405.6 351.5 403.1C351.5 400.6 348 401.1 346 403.6" fill="none" stroke="#000" stroke-width="1.1"/><ellipse cx="355" cy="406.6" rx="3.5" ry="2.55" fill="#000" transform="rotate(-22 355 406.6)"/><line x1="358.5" y1="406.6" x2="358.5" y2="385" stroke="#000" stroke-width="1.1"/><path d="M332.0 386.8L359.0 383.3L359.0 386.7L332.0 390.2Z" fill="#000"/><path d="M371 397V409.5M375.2 404V415.5" stroke="#000" stroke-width="1"/><path d="M371 405L375.2 403.5V405.5L371 407ZM371 410L375.2 408.5V410.5L371 412Z" fill="#000"/><ellipse cx="381.8" cy="407" rx="3.5" ry="2.55" fill="#000" transform="rotate(-22 381.8 407)"/><line x1="385.3" y1="407" x2="385.3" y2="384.5" stroke="#000" stroke-width="1.1"/><ellipse cx="398.5" cy="399.8" rx="3.5" ry="2.55" fill="#000" transform="rotate(-22 398.5 399.8)"/><line x1="402" y1="399.8" x2="402" y2="378.5" stroke="#000" stroke-width="1.1"/><path d="M384.8 382.8L402.5 376.8L402.5 380.2L384.8 386.2Z" fill="#000"/><ellipse cx="415.9" cy="396.8" rx="3.5" ry="2.55" fill="#000" transform="rotate(-22 415.9 396.8)"/><line x1="412.5" y1="396.8" x2="412.5" y2="418.5" stroke="#000" stroke-width="1.1"/><path d="M420 391Q437.0 381.0 454 391Q437.0 384.2 420 391Z" fill="#000" stroke="#000" stroke-width="0.4"/><ellipse cx="460.5" cy="396.6" rx="5" ry="3.4" fill="#000"/><ellipse cx="460.7" cy="396.6" rx="1.9" ry="2.5" fill="#fff6e1" transform="rotate(-35 460.5 396.6)"/><path d="M469 390Q564.5 375.0 660 390Q564.5 379.0 469 390Z" fill="#000" stroke="#000" stroke-width="0.4"/><rect x="600" y="397" width="6.5" height="3.3" fill="#000"/><ellipse cx="670" cy="397.2" rx="3.5" ry="2.4" fill="none" stroke="#000" stroke-width="1.1" transform="rotate(-25 670 397.2)"/><line x1="666.8" y1="397.2" x2="666.8" y2="418.5" stroke="#000" stroke-width="1.1"/><ellipse cx="747" cy="409.5" rx="3.5" ry="2.55" fill="#000" transform="rotate(-22 747 409.5)"/><line x1="750.3" y1="409.5" x2="750.3" y2="388" stroke="#000" stroke-width="1.1"/><path d="M764.5 394.8V409.8C766.5 407.8 770.0 405.8 770.0 403.3C770.0 400.8 766.5 401.3 764.5 403.8" fill="none" stroke="#000" stroke-width="1.1"/><ellipse cx="773.3" cy="406.8" rx="3.5" ry="2.55" fill="#000" transform="rotate(-22 773.3 406.8)"/><line x1="776.7" y1="406.8" x2="776.7" y2="385.3" stroke="#000" stroke-width="1.1"/><path d="M749.8 386.3L777.2 383.6L777.2 387.0L749.8 389.7Z" fill="#000"/><path d="M789.5 396.8V409.3M793.7 403.8V415.3" stroke="#000" stroke-width="1"/><path d="M789.5 404.8L793.7 403.3V405.3L789.5 406.8ZM789.5 409.8L793.7 408.3V410.3L789.5 411.8Z" fill="#000"/><ellipse cx="800" cy="406.8" rx="3.5" ry="2.55" fill="#000" transform="rotate(-22 800 406.8)"/><line x1="803.5" y1="406.8" x2="803.5" y2="384.8" stroke="#000" stroke-width="1.1"/><ellipse cx="816.6" cy="400.1" rx="3.5" ry="2.55" fill="#000" transform="rotate(-22 816.6 400.1)"/><line x1="820" y1="400.1" x2="820" y2="379" stroke="#000" stroke-width="1.1"/><path d="M803.0 383.1L820.5 377.3L820.5 380.7L803.0 386.5Z" fill="#000"/><ellipse cx="834" cy="390.6" rx="3.5" ry="2.55" fill="#000" transform="rotate(-22 834 390.6)"/><line x1="830.5" y1="390.6" x2="830.5" y2="412.3" stroke="#000" stroke-width="1.1"/><ellipse cx="867.2" cy="400.1" rx="3.5" ry="2.55" fill="#000" transform="rotate(-22 867.2 400.1)"/><line x1="863.8" y1="400.1" x2="863.8" y2="420.5" stroke="#000" stroke-width="1.1"/><ellipse cx="883.9" cy="397" rx="3.5" ry="2.55" fill="#000" transform="rotate(-22 883.9 397)"/><line x1="880.5" y1="397" x2="880.5" y2="418" stroke="#000" stroke-width="1.1"/><path d="M863.3 418.8L881.0 416.3L881.0 419.7L863.3 422.2Z" fill="#000"/><line x1="252" y1="484.40" x2="902" y2="484.40" stroke="#b4ac9a" stroke-width="1"/><line x1="252" y1="490.80" x2="902" y2="490.80" stroke="#b4ac9a" stroke-width="1"/><line x1="252" y1="497.20" x2="902" y2="497.20" stroke="#b4ac9a" stroke-width="1"/><line x1="252" y1="503.60" x2="902" y2="503.60" stroke="#b4ac9a" stroke-width="1"/><line x1="252" y1="510.00" x2="902" y2="510.00" stroke="#b4ac9a" stroke-width="1"/><line x1="252" y1="484.4" x2="252" y2="510.00" stroke="#8a8478" stroke-width="1"/><line x1="459.5" y1="484.4" x2="459.5" y2="510.00" stroke="#8a8478" stroke-width="1"/><line x1="612.5" y1="484.4" x2="612.5" y2="510.00" stroke="#8a8478" stroke-width="1"/><line x1="756.5" y1="484.4" x2="756.5" y2="510.00" stroke="#8a8478" stroke-width="1"/><line x1="902" y1="484.4" x2="902" y2="510.00" stroke="#8a8478" stroke-width="1"/><text x="252" y="478.1" font-size="9" text-anchor="middle" fill="#111">9</text><text x="459.5" y="478.1" font-size="9" text-anchor="middle" fill="#111">10</text><text x="612.5" y="478.1" font-size="9" text-anchor="middle" fill="#111">11</text><text x="756.5" y="478.1" font-size="9" text-anchor="middle" fill="#111">12</text><g transform="translate(257,484.4)"><path d="M0.6 6.2C0.4 1.8 4.2 -0.6 7.8 -0.6C13.2 -0.6 16.2 3.4 16.2 8.6C16.2 15 9.5 20.5 0.6 23.6L0.2 22.8C7.2 19.2 11.8 14.2 11.8 8.2C11.8 3 10 0.6 7.4 0.6C5 0.6 3.2 2 3 3.6Z" fill="#000"/><circle cx="3.3" cy="6.2" r="3.1" fill="#000"/><circle cx="19" cy="3.4" r="1.05" fill="#000"/><circle cx="19" cy="9.6" r="1.05" fill="#000"/></g><circle cx="297.6" cy="493.8" r="1.6" fill="#000"/><path d="M297 495C299 495.8 301 494.5 302 492.5L302.6 492.8L299 503L298.2 503L301 495C300 495.8 298.5 496 297 495Z" fill="#000"/><path d="M312 491.6V506.6C314 504.6 317.5 502.6 317.5 500.1C317.5 497.6 314 498.1 312 500.6" fill="none" stroke="#000" stroke-width="1.1"/><ellipse cx="321.5" cy="503.6" rx="3.5" ry="2.55" fill="#000" transform="rotate(-22 321.5 503.6)"/><line x1="325" y1="503.6" x2="325" y2="481.5" stroke="#000" stroke-width="1.1"/><path d="M325 481.5C326 486.5 333 489.5 332 498.5C331.5 500.5 331 501.5 330.5 502.5C331 498.5 329 491.5 325 489.5Z" fill="#000"/><circle cx="341.1" cy="493.8" r="1.6" fill="#000"/><path d="M340.5 495C342.5 495.8 344.5 494.5 345.5 492.5L346.1 492.8L342.5 503L341.7 503L344.5 495C343.5 495.8 342.0 496 340.5 495Z" fill="#000"/><path d="M356 468.4V483.4C358 481.4 361.5 479.4 361.5 476.9C361.5 474.4 358 474.9 356 477.4" fill="none" stroke="#000" stroke-width="1.1"/><ellipse cx="364.7" cy="480.4" rx="3.5" ry="2.55" fill="#000" transform="rotate(-22 364.7 480.4)"/><line x1="361.2" y1="480.4" x2="361.2" y2="503" stroke="#000" stroke-width="1.1"/><path d="M361.2 503C362.2 499 368.2 496 367.7 489C367.2 487 366.7 486 366.2 485C367.2 489 365.2 494 361.2 497Z" fill="#000"/><path d="M382 491.2V506.2C384 504.2 387.5 502.2 387.5 499.7C387.5 497.2 384 497.7 382 500.2" fill="none" stroke="#000" stroke-width="1.1"/><ellipse cx="391.6" cy="503.2" rx="3.5" ry="2.55" fill="#000" transform="rotate(-22 391.6 503.2)"/><line x1="388.2" y1="503.2" x2="388.2" y2="523.5" stroke="#000" stroke-width="1.1"/><ellipse cx="408.7" cy="484.1" rx="3.5" ry="2.55" fill="#000" transform="rotate(-22 408.7 484.1)"/><line x1="405.3" y1="484.1" x2="405.3" y2="506.5" stroke="#000" stroke-width="1.1"/><path d="M387.7 521.8L405.8 504.8L405.8 508.2L387.7 525.2Z" fill="#000"/><ellipse cx="425" cy="487.4" rx="3.5" ry="2.55" fill="#000" transform="rotate(-22 425 487.4)"/><line x1="421.6" y1="487.4" x2="421.6" y2="508" stroke="#000" stroke-width="1.1"/><ellipse cx="442" cy="497.1" rx="3.5" ry="2.55" fill="#000" transform="rotate(-22 442 497.1)"/><line x1="438.6" y1="497.1" x2="438.6" y2="517.8" stroke="#000" stroke-width="1.1"/><path d="M421.1 506.3L439.1 516.0999999999999L439.1 519.5L421.1 509.7Z" fill="#000"/><ellipse cx="468" cy="493.5" rx="3.5" ry="2.55" fill="#000" transform="rotate(-22 468 493.5)"/><line x1="464.6" y1="493.5" x2="464.6" y2="514.5" stroke="#000" stroke-width="1.1"/><ellipse cx="485.2" cy="487.1" rx="3.5" ry="2.55" fill="#000" transform="rotate(-22 485.2 487.1)"/><line x1="481.8" y1="487.1" x2="481.8" y2="508" stroke="#000" stroke-width="1.1"/><path d="M464.1 512.8L482.3 506.3L482.3 509.7L464.1 516.2Z" fill="#000"/><ellipse cx="502" cy="497.1" rx="3.5" ry="2.55" fill="#000" transform="rotate(-22 502 497.1)"/><line x1="505.4" y1="497.1" x2="505.4" y2="475.5" stroke="#000" stroke-width="1.1"/><path d="M518 491.4V506.4C520 504.4 523.5 502.4 523.5 499.9C523.5 497.4 520 497.9 518 500.4" fill="none" stroke="#000" stroke-width="1.1"/><ellipse cx="528.3" cy="503.4" rx="3.5" ry="2.55" fill="#000" transform="rotate(-22 528.3 503.4)"/><line x1="531.7" y1="503.4" x2="531.7" y2="482.5" stroke="#000" stroke-width="1.1"/><path d="M504.9 473.8L532.2 480.8L532.2 484.2L504.9 477.2Z" fill="#000"/><ellipse cx="545" cy="506.7" rx="3.5" ry="2.55" fill="#000" transform="rotate(-22 545 506.7)"/><line x1="548.4" y1="506.7" x2="548.4" y2="484.5" stroke="#000" stroke-width="1.1"/><ellipse cx="562.2" cy="509.8" rx="3.5" ry="2.55" fill="#000" transform="rotate(-22 562.2 509.8)"/><line x1="565.6" y1="509.8" x2="565.6" y2="488" stroke="#000" stroke-width="1.1"/><path d="M547.9 482.8L566.1 486.3L566.1 489.7L547.9 486.2Z" fill="#000"/><ellipse cx="578.5" cy="506.7" rx="3.5" ry="2.55" fill="#000" transform="rotate(-22 578.5 506.7)"/><line x1="581.9" y1="506.7" x2="581.9" y2="484.5" stroke="#000" stroke-width="1.1"/><ellipse cx="595.3" cy="510.3" rx="3.5" ry="2.55" fill="#000" transform="rotate(-22 595.3 510.3)"/><line x1="598.7" y1="510.3" x2="598.7" y2="488" stroke="#000" stroke-width="1.1"/><path d="M581.4 482.8L599.2 486.3L599.2 489.7L581.4 486.2Z" fill="#000"/><path d="M600 512Q606 518 610 514.5Q614 511 618 512" fill="none" stroke="#000" stroke-width="1.2"/><ellipse cx="622.8" cy="509.5" rx="3.5" ry="2.4" fill="none" stroke="#000" stroke-width="1.1" transform="rotate(-25 622.8 509.5)"/><line x1="626.2" y1="509.5" x2="626.2" y2="487" stroke="#000" stroke-width="1.1"/><circle cx="631" cy="509.5" r="0.9" fill="#000"/><line x1="717.5" y1="516.3" x2="728.5" y2="516.3" stroke="#000" stroke-width="1"/><ellipse cx="722.8" cy="519.3" rx="3.5" ry="2.55" fill="#000" transform="rotate(-22 722.8 519.3)"/><line x1="726.3" y1="519.3" x2="726.3" y2="497" stroke="#000" stroke-width="1.1"/><line x1="761.5" y1="516.4" x2="773.5" y2="516.4" stroke="#000" stroke-width="1"/><ellipse cx="767.5" cy="516.4" rx="5" ry="3.4" fill="#000"/><ellipse cx="767.7" cy="516.4" rx="1.9" ry="2.5" fill="#fff6e1" transform="rotate(-35 767.5 516.4)"/><path d="M777 516.5Q834.0 527.5 891 516.5Q834.0 523.5 777 516.5Z" fill="#000" stroke="#000" stroke-width="0.4"/><line x1="252" y1="581.40" x2="902" y2="581.40" stroke="#b4ac9a" stroke-width="1"/><line x1="252" y1="587.80" x2="902" y2="587.80" stroke="#b4ac9a" stroke-width="1"/><line x1="252" y1="594.20" x2="902" y2="594.20" stroke="#b4ac9a" stroke-width="1"/><line x1="252" y1="600.60" x2="902" y2="600.60" stroke="#b4ac9a" stroke-width="1"/><line x1="252" y1="607.00" x2="902" y2="607.00" stroke="#b4ac9a" stroke-width="1"/><line x1="252" y1="581.4" x2="252" y2="607.00" stroke="#8a8478" stroke-width="1"/><line x1="439.5" y1="581.4" x2="439.5" y2="607.00" stroke="#8a8478" stroke-width="1"/><line x1="594" y1="581.4" x2="594" y2="607.00" stroke="#8a8478" stroke-width="1"/><line x1="747.5" y1="581.4" x2="747.5" y2="607.00" stroke="#8a8478" stroke-width="1"/><line x1="902" y1="581.4" x2="902" y2="607.00" stroke="#8a8478" stroke-width="1"/><text x="252" y="575.1" font-size="9" text-anchor="middle" fill="#111">13</text><text x="439.5" y="575.1" font-size="9" text-anchor="middle" fill="#111">14</text><text x="594" y="575.1" font-size="9" text-anchor="middle" fill="#111">15</text><text x="747.5" y="575.1" font-size="9" text-anchor="middle" fill="#111">16</text><g transform="translate(257,581.4)"><path d="M0.6 6.2C0.4 1.8 4.2 -0.6 7.8 -0.6C13.2 -0.6 16.2 3.4 16.2 8.6C16.2 15 9.5 20.5 0.6 23.6L0.2 22.8C7.2 19.2 11.8 14.2 11.8 8.2C11.8 3 10 0.6 7.4 0.6C5 0.6 3.2 2 3 3.6Z" fill="#000"/><circle cx="3.3" cy="6.2" r="3.1" fill="#000"/><circle cx="19" cy="3.4" r="1.05" fill="#000"/><circle cx="19" cy="9.6" r="1.05" fill="#000"/></g><path d="M257 611Q274.5 621.0 292 613Q274.5 617.4 257 611Z" fill="#000" stroke="#000" stroke-width="0.4"/><line x1="290.3" y1="613.4" x2="302.3" y2="613.4" stroke="#000" stroke-width="1"/><ellipse cx="296.3" cy="613.4" rx="3.5" ry="2.4" fill="none" stroke="#000" stroke-width="1.1" transform="rotate(-25 296.3 613.4)"/><line x1="299.5" y1="613.4" x2="299.5" y2="590.8" stroke="#000" stroke-width="1.1"/><ellipse cx="367.4" cy="600.7" rx="3.5" ry="2.55" fill="#000" transform="rotate(-22 367.4 600.7)"/><line x1="370.8" y1="600.7" x2="370.8" y2="578" stroke="#000" stroke-width="1.1"/><ellipse cx="403.4" cy="591.1" rx="3.5" ry="2.55" fill="#000" transform="rotate(-22 403.4 591.1)"/><line x1="400" y1="591.1" x2="400" y2="612.5" stroke="#000" stroke-width="1.1"/><path d="M408 585Q426.0 575.0 444 585Q426.0 578.2 408 585Z" fill="#000" stroke="#000" stroke-width="0.4"/><ellipse cx="450.7" cy="591.1" rx="5" ry="3.4" fill="#000"/><ellipse cx="450.9" cy="591.1" rx="1.9" ry="2.5" fill="#fff6e1" transform="rotate(-35 450.7 591.1)"/><path d="M460 584Q562.5 570.0 665 584Q562.5 574.0 460 584Z" fill="#000" stroke="#000" stroke-width="0.4"/><rect x="599.8" y="591.0" width="6.5" height="3.3" fill="#000"/><ellipse cx="675" cy="590.7" rx="3.5" ry="2.4" fill="none" stroke="#000" stroke-width="1.1" transform="rotate(-25 675 590.7)"/><line x1="671.7" y1="590.7" x2="671.7" y2="613" stroke="#000" stroke-width="1.1"/><line x1="751.0" y1="613.6" x2="763.0" y2="613.6" stroke="#000" stroke-width="1"/><ellipse cx="757" cy="613.6" rx="5" ry="3.4" fill="#000"/><ellipse cx="757.2" cy="613.6" rx="1.9" ry="2.5" fill="#fff6e1" transform="rotate(-35 757 613.6)"/><path d="M767 613.5Q829.0 624.5 891 613.5Q829.0 620.5 767 613.5Z" fill="#000" stroke="#000" stroke-width="0.4"/><line x1="252" y1="678.40" x2="902" y2="678.40" stroke="#b4ac9a" stroke-width="1"/><line x1="252" y1="684.80" x2="902" y2="684.80" stroke="#b4ac9a" stroke-width="1"/><line x1="252" y1="691.20" x2="902" y2="691.20" stroke="#b4ac9a" stroke-width="1"/><line x1="252" y1="697.60" x2="902" y2="697.60" stroke="#b4ac9a" stroke-width="1"/><line x1="252" y1="704.00" x2="902" y2="704.00" stroke="#b4ac9a" stroke-width="1"/><line x1="252" y1="678.4" x2="252" y2="704.00" stroke="#8a8478" stroke-width="1"/><line x1="440" y1="678.4" x2="440" y2="704.00" stroke="#8a8478" stroke-width="1"/><line x1="594" y1="678.4" x2="594" y2="704.00" stroke="#8a8478" stroke-width="1"/><line x1="748" y1="678.4" x2="748" y2="704.00" stroke="#8a8478" stroke-width="1"/><line x1="902" y1="678.4" x2="902" y2="704.00" stroke="#8a8478" stroke-width="1"/><text x="252" y="672.1" font-size="9" text-anchor="middle" fill="#111">17</text><text x="440" y="672.1" font-size="9" text-anchor="middle" fill="#111">18</text><text x="594" y="672.1" font-size="9" text-anchor="middle" fill="#111">19</text><text x="748" y="672.1" font-size="9" text-anchor="middle" fill="#111">20</text><g transform="translate(257,678.4)"><path d="M0.6 6.2C0.4 1.8 4.2 -0.6 7.8 -0.6C13.2 -0.6 16.2 3.4 16.2 8.6C16.2 15 9.5 20.5 0.6 23.6L0.2 22.8C7.2 19.2 11.8 14.2 11.8 8.2C11.8 3 10 0.6 7.4 0.6C5 0.6 3.2 2 3 3.6Z" fill="#000"/><circle cx="3.3" cy="6.2" r="3.1" fill="#000"/><circle cx="19" cy="3.4" r="1.05" fill="#000"/><circle cx="19" cy="9.6" r="1.05" fill="#000"/></g><path d="M257 708Q274.5 718.0 292 710Q274.5 714.4 257 708Z" fill="#000" stroke="#000" stroke-width="0.4"/><line x1="290.3" y1="710.4" x2="302.3" y2="710.4" stroke="#000" stroke-width="1"/><ellipse cx="296.3" cy="710.4" rx="3.5" ry="2.4" fill="none" stroke="#000" stroke-width="1.1" transform="rotate(-25 296.3 710.4)"/><line x1="299.5" y1="710" x2="299.5" y2="688" stroke="#000" stroke-width="1.1"/><circle cx="303.5" cy="709.5" r="0.9" fill="#000"/><ellipse cx="403.5" cy="703.9" rx="3.5" ry="2.55" fill="#000" transform="rotate(-22 403.5 703.9)"/><line x1="406.9" y1="703.9" x2="406.9" y2="682" stroke="#000" stroke-width="1.1"/><ellipse cx="421.7" cy="703.9" rx="3.5" ry="2.55" fill="#000" transform="rotate(-22 421.7 703.9)"/><line x1="425.1" y1="703.9" x2="425.1" y2="682" stroke="#000" stroke-width="1.1"/><path d="M406.4 680.6L425.6 680.6L425.6 683.8000000000001L406.4 683.8000000000001Z" fill="#000"/><ellipse cx="450.6" cy="700.6" rx="5" ry="3.4" fill="#000"/><ellipse cx="450.8" cy="700.6" rx="1.9" ry="2.5" fill="#fff6e1" transform="rotate(-35 450.6 700.6)"/><path d="M460 701Q526.0 711.0 592 701Q526.0 707.0 460 701Z" fill="#000" stroke="#000" stroke-width="0.4"/><ellipse cx="602.6" cy="700.6" rx="3.5" ry="2.4" fill="none" stroke="#000" stroke-width="1.1" transform="rotate(-25 602.6 700.6)"/><line x1="605.8" y1="700.6" x2="605.8" y2="678.5" stroke="#000" stroke-width="1.1"/><circle cx="609.5" cy="700.5" r="0.9" fill="#000"/><path d="M613 701Q657.25 711.0 701.5 701Q657.25 707.0 613 701Z" fill="#000" stroke="#000" stroke-width="0.4"/><ellipse cx="711.6" cy="700.8" rx="3.5" ry="2.55" fill="#000" transform="rotate(-22 711.6 700.8)"/><line x1="715" y1="700.8" x2="715" y2="678.7" stroke="#000" stroke-width="1.1"/><path d="M715 678.7C716 683.7 723 686.7 722 695.7C721.5 697.7 721 698.7 720.5 699.7C721 695.7 719 688.7 715 686.7Z" fill="#000"/><circle cx="732.1" cy="687.3" r="1.6" fill="#000"/><path d="M731.5 688.5C733.5 689.3 735.5 688.0 736.5 686.0L737.1 686.3L733.5 696.5L732.7 696.5L735.5 688.5C734.5 689.3 733.0 689.5 731.5 688.5Z" fill="#000"/><line x1="751.4" y1="710.4" x2="763.4" y2="710.4" stroke="#000" stroke-width="1"/><ellipse cx="757.4" cy="710.4" rx="5" ry="3.4" fill="#000"/><ellipse cx="757.6" cy="710.4" rx="1.9" ry="2.5" fill="#fff6e1" transform="rotate(-35 757.4 710.4)"/><path d="M767 710.5Q829.0 721.5 891 710.5Q829.0 717.5 767 710.5Z" fill="#000" stroke="#000" stroke-width="0.4"/><rect x="359" y="255" width="3" height="97" fill="#ff0000"/></g></svg>
<div id="grayr" class="a"></div>
<div id="status" class="a">
  <div class="f" style="left:8px;width:350px">Song file OK</div>
  <div class="f" style="left:366px;width:93px">Synth Loaded</div>
  <div class="f" style="left:458px;width:151px">Select MIDI Instrument</div>
  <div class="f" style="left:608px;width:21px"></div>
  <div class="f" style="left:629px;width:179px"></div>
  <div class="a" style="left:958px;top:3px;font-size:12px;color:#111">© Datasol Pty Ltd</div>
  <svg class="a" style="left:608px;top:2px" width="22" height="20"><path d="M7.5 6V13M9.5 6V13M11.5 6V13M13.5 6V13" stroke="#000" stroke-width="1.3"/><path d="M6 7.5H15M6 11.5H15" stroke="#000" stroke-width="1.6"/><path d="M3.5 9.5H5M16 9.5H17.5M10.5 2.5V4M10.5 15V16.5M4 3L5.5 4.5M17 3L15.5 4.5M4 16L5.5 14.5M17 16L15.5 14.5" stroke="#000" stroke-width="1.2"/></svg>
  <div class="a" style="left:1068px;top:19px;width:20px;height:5px;background:#c4c4c4"></div>
  <svg class="a" style="left:1068px;top:5px" width="20" height="15"><rect x="1.5" y="1.5" width="16" height="12" fill="#fff" stroke="#000" stroke-width="1.4"/><path d="M4.5 2V9M9.5 2V9M14.5 2V9" stroke="#000" stroke-width="2.6"/><path d="M7 9V13M12 9V13" stroke="#000" stroke-width="1"/></svg>
  <div class="a" style="left:1094px;top:5px;width:11px;height:19px;background:#fff"></div>
</div>
<div id="sbline" class="a"></div>
</body></html>
